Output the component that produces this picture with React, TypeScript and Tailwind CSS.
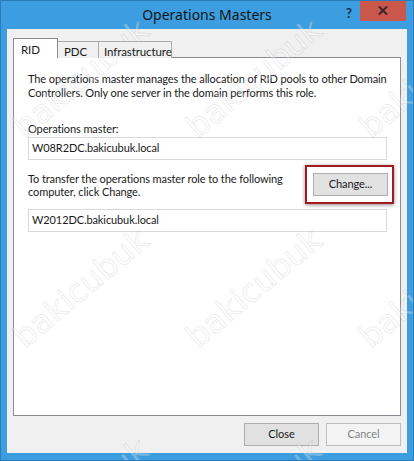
const marks = [
  { x: 80, y: 77 },
  { x: 253, y: 77 },
  { x: 426, y: 77 },
  { x: 80, y: 287 },
  { x: 253, y: 287 },
  { x: 426, y: 287 },
  { x: 80, y: 497 },
  { x: 253, y: 497 },
];

const TextBox = ({ value }: { value: string }) => (
  <div className="h-[23px] border border-[#d9d9d9] bg-white pl-[3px] flex items-center text-[#1a1a1a]">
    {value}
  </div>
);

const App = () => {
  return (
    <div
      className="relative w-[414px] h-[461px] overflow-hidden bg-[#3c9ee0] border border-[#2c7cbc] flex flex-col px-[6px] pb-[7px]"
      style={{ fontFamily: 'Lato, "Liberation Sans", sans-serif' }}
    >
      {/* title bar */}
      <div className="relative h-[28px] flex items-center justify-center">
        <span className="text-[14px] text-[#141414] mt-[-2px]" style={{ fontFamily: '"Noto Sans", sans-serif' }}>
          Operations Masters
        </span>
        <span className="absolute right-[55px] top-[3px] text-[13px] font-bold text-[#1f2d45]">?</span>
        <div className="absolute right-[1px] top-[-1px] w-[46px] h-[21px] bg-[#c9574c] flex items-center justify-center">
          <svg width="10" height="9" viewBox="0 0 10 9">
            <path d="M1 0.5 L9 8.5 M9 0.5 L1 8.5" stroke="#3a2626" strokeWidth="2" />
          </svg>
        </div>
      </div>

      {/* client area */}
      <div className="flex-1 bg-[#f0f0f0] flex flex-col px-[6px] pt-[9px] pb-[7px] text-[11px] tracking-[-0.1px] text-[#1a1a1a]">
        {/* tabs */}
        <div className="flex items-end h-[20px] relative z-10 mb-[-1px] text-[11.5px]">
          <div className="w-[45px] h-[20px] bg-white border border-b-0 border-[#898c95] pl-[7px] pt-[2px]">RID</div>
          <div className="w-[41px] h-[17px] bg-[#f0f0f0] border border-l-0 border-b-0 border-[#acacac] pl-[6px] pt-[1px]">PDC</div>
          <div className="w-[73px] h-[17px] bg-[#f0f0f0] border border-l-0 border-b-0 border-[#acacac] pl-[5px] pt-[1px]">Infrastructure</div>
        </div>

        {/* panel */}
        <div className="flex-1 bg-white border border-[#898c95] pl-[14px] pr-[13px] pt-[14px]">
          <p className="leading-[14px] whitespace-nowrap">
            The operations master manages the allocation of RID pools to other Domain
            <br />
            Controllers. Only one server in the domain performs this role.
          </p>
          <p className="mt-[22px] mb-[1px] leading-[14px]">Operations master:</p>
          <TextBox value="W08R2DC.bakicubuk.local" />
          <div className="flex justify-between items-start mt-[12px]">
            <p className="leading-[13px] whitespace-nowrap">
              To transfer the operations master role to the following
              <br />
              computer, click Change.
            </p>
            <div className="relative mt-[1px] mr-[-1px]">
              <div className="absolute left-[-8px] right-[-6px] top-[-8px] bottom-[-8px] border-2 border-[#a11c22] shadow-[0_1px_4px_rgba(0,0,0,0.45)]" />
              <div className="w-[75px] h-[23px] bg-[#e1e1e1] border border-[#adadad] flex items-center justify-center">
                Change...
              </div>
            </div>
          </div>
          <div className="mt-[11px]">
            <TextBox value="W2012DC.bakicubuk.local" />
          </div>
        </div>

        {/* buttons */}
        <div className="flex justify-end gap-[7px] mt-[7px]">
          <div className="w-[75px] h-[23px] bg-[#e1e1e1] border border-[#adadad] flex items-center justify-center">Close</div>
          <div className="w-[75px] h-[23px] bg-[#f4f4f4] border border-[#bfbfbf] flex items-center justify-center text-[#838383]">
            Cancel
          </div>
        </div>
      </div>

      {/* watermark */}
      <div className="absolute inset-0 pointer-events-none">
        {marks.map((m, i) => (
          <span
            key={i}
            className="absolute text-[32px] leading-none text-white/30 [-webkit-text-stroke:1px_rgba(120,120,120,0.14)] whitespace-nowrap"
            style={{
              left: m.x,
              top: m.y,
              transform: "translate(-50%, -50%) rotate(-40deg)",
              fontFamily: '"DejaVu Sans", sans-serif',
            }}
          >
            bakicubuk
          </span>
        ))}
      </div>
    </div>
  );
};

export default App;
